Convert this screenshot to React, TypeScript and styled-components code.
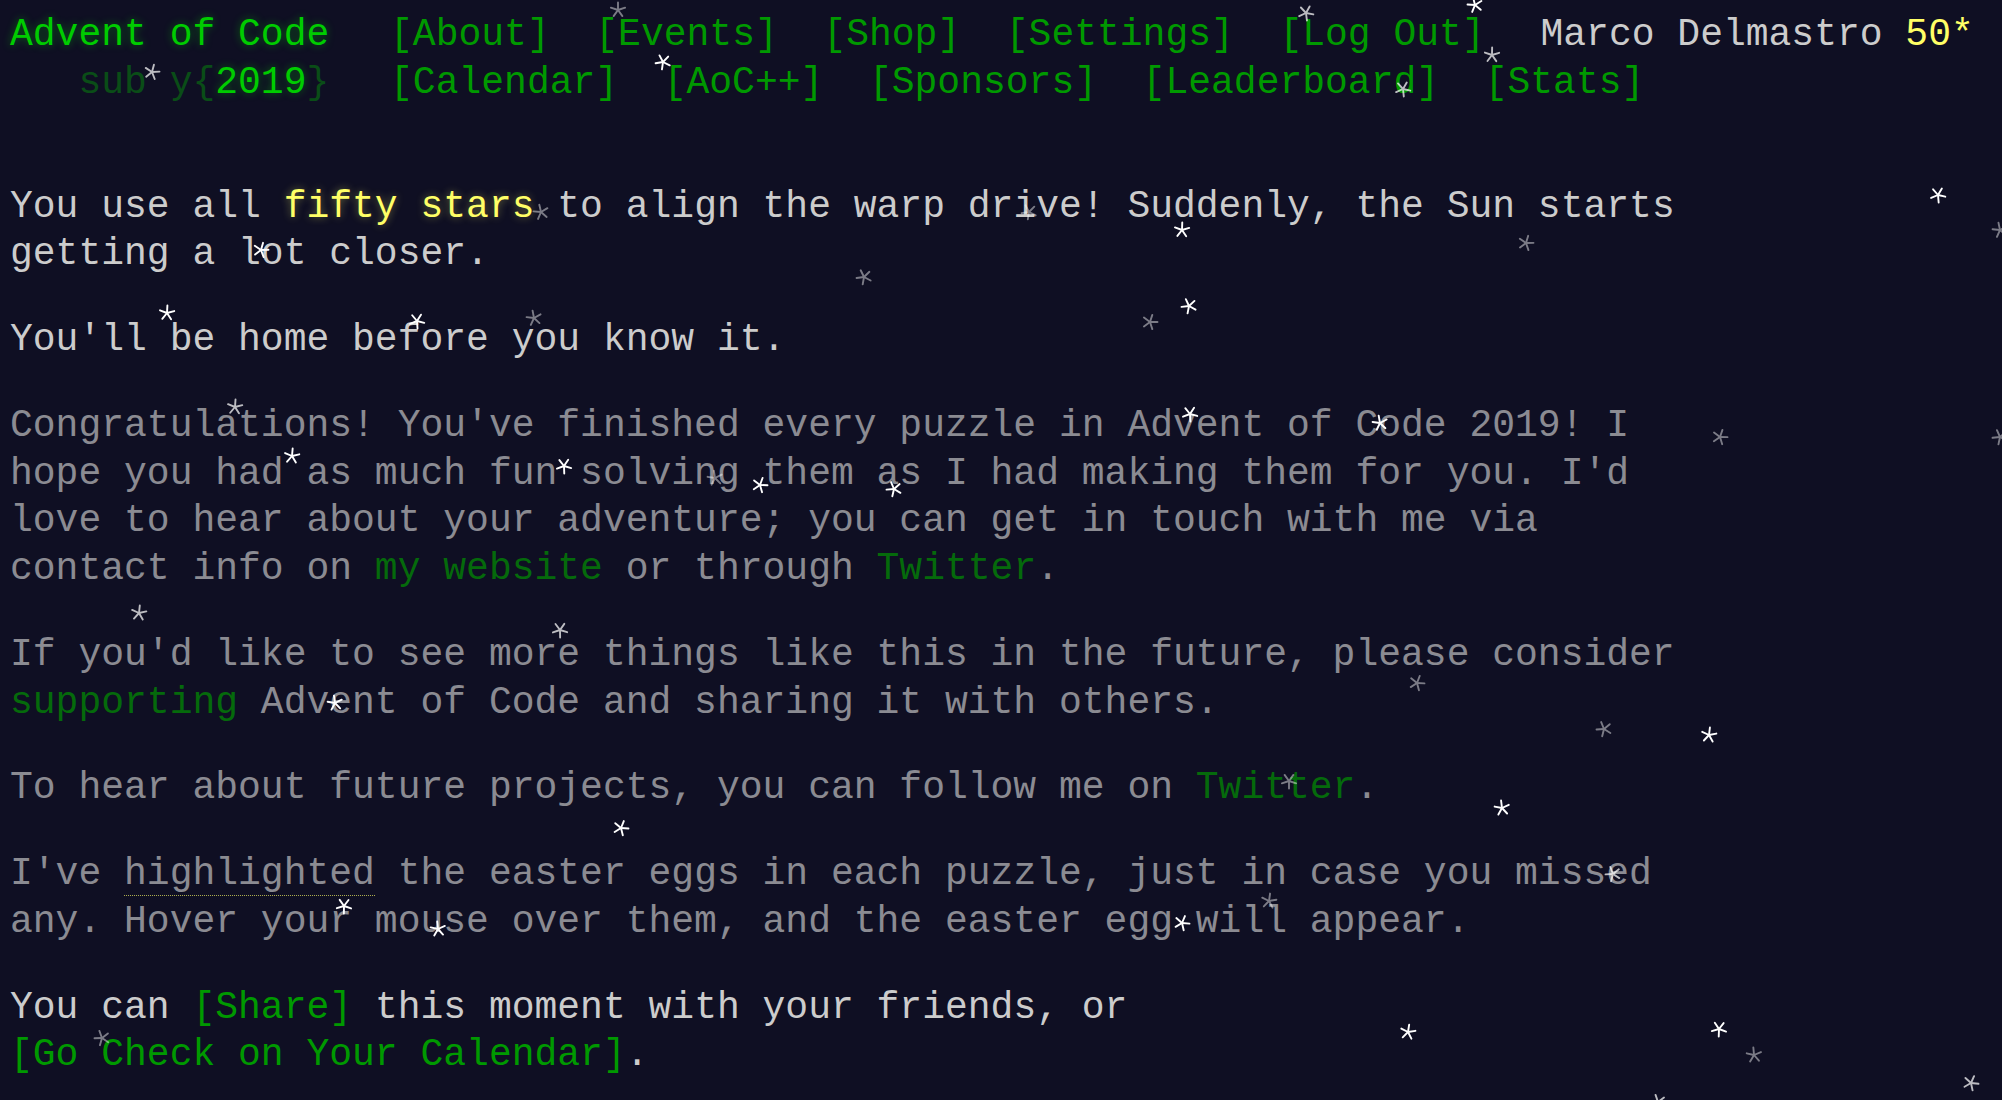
import React from 'react';
import styled, { createGlobalStyle } from 'styled-components';

const GlobalStyle = createGlobalStyle`
  html, body {
    margin: 0;
    background: #0f0f23;
    overflow: hidden;
  }
  body {
    color: #cccccc;
    font-family: "Liberation Mono", "DejaVu Sans Mono", monospace;
    font-size: 38px;
    line-height: 47.77px;
    padding: 11px 10px 0 10px;
    min-height: 100vh;
    box-sizing: border-box;
  }
`;

const Header = styled.header`
  display: flex;
  flex-direction: column;
  white-space: nowrap;
  margin-bottom: 76px;
`;

const HeaderRow = styled.div`
  display: flex;
  align-items: baseline;
`;

const Title = styled.h1`
  margin: 0;
  font-size: inherit;
  font-weight: 400;
  width: 14ch;
  padding-right: 1em;
  white-space: pre;
`;

const Glow = styled.a`
  color: #00cc00;
  font-weight: 400;
  text-decoration: none;
  text-shadow: 0 0 8px rgba(0, 204, 0, 0.45);
`;

const Wrap = styled.span`
  color: #00cc00;
  opacity: 0.33;
`;

const NavList = styled.ul`
  list-style: none;
  margin: 0;
  padding: 0;
  display: flex;
`;

const NavItem = styled.li`
  padding: 0 0.6em;
`;

const Link = styled.a<{ $nowrap?: boolean }>`
  color: #009900;
  text-decoration: none;
  white-space: ${(p) => (p.$nowrap ? 'nowrap' : 'normal')};
`;

const User = styled.div`
  margin-left: 33px;
  color: #cccccc;
`;

const StarCount = styled.span`
  color: #ffff66;
`;

const Main = styled.main`
  display: block;
`;

const Article = styled.article`
  width: 74ch;
`;

const Para = styled.p<{ $quiet?: boolean }>`
  margin: 38px 0;
  opacity: ${(p) => (p.$quiet ? 0.66 : 1)};
`;

const Shiny = styled.span`
  color: #ffff66;
  text-shadow: 0 0 8px rgba(255, 255, 102, 0.4);
`;

const Egg = styled.span`
  border-bottom: 1px dotted #ffff66;
`;

const StarField = styled.div`
  position: fixed;
  inset: 0;
  overflow: hidden;
  pointer-events: none;
`;

type Level = 'b' | 'm' | 'd';

const StarSvg = styled.svg<{ $level: Level }>`
  position: absolute;
  width: 18px;
  height: 18px;
  margin: -9px 0 0 -9px;
  stroke: #ffffff;
  stroke-width: 1.9;
  stroke-linecap: round;
  fill: none;
  opacity: ${(p) => (p.$level === 'b' ? 1 : p.$level === 'm' ? 0.72 : 0.45)};
`;

const stars: [number, number, Level][] = [
  [618, 10, 'd'],
  [1306, 13, 'm'],
  [1475, 5, 'b'],
  [152, 72, 'm'],
  [663, 62, 'b'],
  [1492, 55, 'm'],
  [1403, 89, 'm'],
  [541, 212, 'd'],
  [261, 250, 'b'],
  [1029, 212, 'd'],
  [1182, 230, 'b'],
  [1938, 195, 'b'],
  [2000, 230, 'd'],
  [1526, 243, 'd'],
  [864, 277, 'd'],
  [167, 313, 'b'],
  [417, 321, 'b'],
  [534, 318, 'd'],
  [1150, 322, 'd'],
  [1189, 306, 'b'],
  [235, 407, 'm'],
  [1190, 414, 'b'],
  [1380, 423, 'b'],
  [1720, 437, 'd'],
  [2000, 437, 'd'],
  [292, 456, 'b'],
  [564, 466, 'b'],
  [715, 478, 'd'],
  [760, 485, 'b'],
  [894, 489, 'b'],
  [139, 613, 'm'],
  [560, 630, 'm'],
  [335, 703, 'b'],
  [1417, 683, 'd'],
  [1604, 729, 'd'],
  [1709, 735, 'b'],
  [1289, 781, 'd'],
  [1502, 808, 'b'],
  [621, 828, 'b'],
  [1613, 874, 'm'],
  [1269, 901, 'd'],
  [344, 906, 'b'],
  [438, 929, 'b'],
  [1182, 923, 'b'],
  [102, 1038, 'd'],
  [1408, 1032, 'b'],
  [1719, 1029, 'b'],
  [1754, 1055, 'd'],
  [1971, 1083, 'm'],
  [1658, 1102, 'm'],
];

const Star: React.FC<{ x: number; y: number; level: Level; rot: number }> = ({ x, y, level, rot }) => {
  const arms = [0, 1, 2, 3, 4].map((k) => {
    const a = ((rot + k * 72) * Math.PI) / 180;
    return { x2: 9 + 7.5 * Math.sin(a), y2: 9 - 7.5 * Math.cos(a) };
  });
  return (
    <StarSvg $level={level} viewBox="0 0 18 18" style={{ left: x, top: y }}>
      {arms.map((p, i) => (
        <line key={i} x1={9} y1={9} x2={p.x2} y2={p.y2} />
      ))}
    </StarSvg>
  );
};

const topNav = ['About', 'Events', 'Shop', 'Settings', 'Log Out'];
const bottomNav = ['Calendar', 'AoC++', 'Sponsors', 'Leaderboard', 'Stats'];

export default function App() {
  return (
    <>
      <GlobalStyle />
      <Header>
        <HeaderRow>
          <Title>
            <Glow href="#">Advent of Code</Glow>
          </Title>
          <NavList>
            {topNav.map((n) => (
              <NavItem key={n}>
                <Link href="#">[{n}]</Link>
              </NavItem>
            ))}
          </NavList>
          <User>
            Marco Delmastro <StarCount>50*</StarCount>
          </User>
        </HeaderRow>
        <HeaderRow>
          <Title>
            {'\u00a0\u00a0\u00a0'}
            <Wrap>sub y{'{'}</Wrap>
            <Glow href="#">2019</Glow>
            <Wrap>{'}'}</Wrap>
          </Title>
          <NavList>
            {bottomNav.map((n) => (
              <NavItem key={n}>
                <Link href="#">[{n}]</Link>
              </NavItem>
            ))}
          </NavList>
        </HeaderRow>
      </Header>
      <Main>
        <Article>
          <Para>
            You use all <Shiny>fifty stars</Shiny> to align the warp drive! Suddenly, the Sun starts getting a
            lot closer.
          </Para>
          <Para>You'll be home before you know it.</Para>
          <Para $quiet>
            Congratulations! You've finished every puzzle in Advent of Code 2019! I hope you had as much fun
            solving them as I had making them for you. I'd love to hear about your adventure; you can get in touch
            with me via contact info on <Link href="#">my website</Link> or through <Link href="#">Twitter</Link>.
          </Para>
          <Para $quiet>
            If you'd like to see more things like this in the future, please consider{' '}
            <Link href="#">supporting</Link> Advent of Code and sharing it with others.
          </Para>
          <Para $quiet>
            To hear about future projects, you can follow me on <Link href="#">Twitter</Link>.
          </Para>
          <Para $quiet>
            I've <Egg>highlighted</Egg> the easter eggs in each puzzle, just in case you missed any. Hover your
            mouse over them, and the easter egg will appear.
          </Para>
          <Para>
            You can <Link href="#">[Share]</Link> this moment with your friends, or{' '}
            <Link href="#" $nowrap>
              [Go Check on Your Calendar]
            </Link>
            .
          </Para>
        </Article>
      </Main>
      <StarField>
        {stars.map(([x, y, l], i) => (
          <Star key={i} x={x} y={y} level={l} rot={(i * 29) % 72} />
        ))}
      </StarField>
    </>
  );
}
